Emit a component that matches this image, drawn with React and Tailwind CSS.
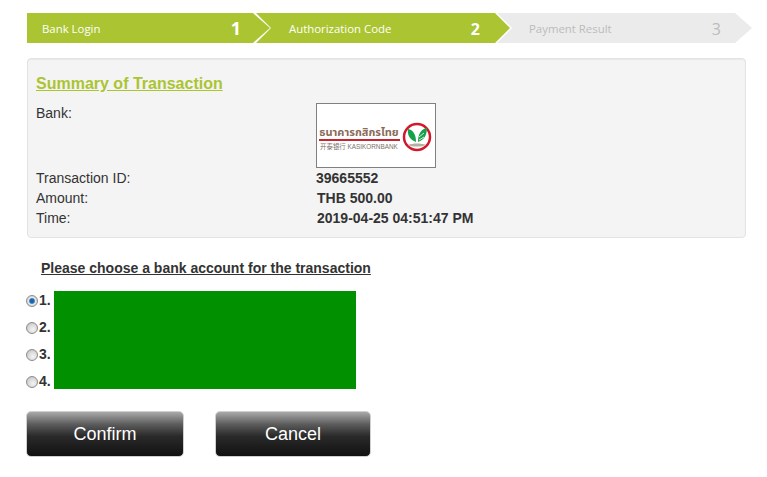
import React from "react";

function Step({ label, num, className, labelClass, numClass, numPos }) {
  return (
    <div className={`flex h-[30px] items-center pt-[1px] ${className}`}>
      <span className={`font-['Open_Sans',sans-serif] text-[11.4px] ${labelClass}`}>{label}</span>
      <span className={`ml-auto font-['Open_Sans',sans-serif] ${numClass} ${numPos}`}>{num}</span>
    </div>
  );
}

function BankLogo() {
  return (
    <div className="flex h-[65px] w-[120px] items-center border border-[#808080] bg-white pl-[1px] pt-[5px]">
      <div className="flex w-[82px] flex-col items-center">
        <span className="font-['Noto_Sans','Noto_Sans_Thai','DejaVu_Sans',sans-serif] text-[11px] font-bold leading-[14px] whitespace-nowrap text-[#8a6a58]">
          ธนาคารกสิกรไทย
        </span>
        <div className="h-[2px] w-[81px] bg-[#d0202c]" />
        <span className="mt-[2px] font-['Liberation_Sans','Noto_Sans_CJK_SC',sans-serif] text-[6.4px] leading-[8px] whitespace-nowrap text-[#7a7068]">
          开泰银行 KASIKORNBANK
        </span>
      </div>
      <svg width="30" height="30" viewBox="0 0 30 30" className="-mt-[2px] ml-[2px]">
        <circle cx="15" cy="15" r="13" fill="#fff" stroke="#d3182c" strokeWidth="2.5" />
        <path d="M14 20 C 8 18 5 13 6 7 C 11 8 14 12 14 20 Z" fill="#15a04c" />
        <path d="M16 20 C 16 12 19 7 25 6 C 25 13 22 18 16 20 Z" fill="#15a04c" />
        <path d="M17 15 L22 11 M17 18 L22 15" stroke="#fff" strokeWidth="0.8" />
        <path d="M6 23 C 11 21 19 21 24 23 C 20 25 10 25 6 23 Z" fill="#b5aea2" />
      </svg>
    </div>
  );
}

function Row({ label, value, valueClass }) {
  return (
    <div className="flex h-5 items-center">
      <div className="w-[280px]">{label}</div>
      <div className={`font-bold ${valueClass}`}>{value}</div>
    </div>
  );
}

function BankOption({ n, checked }) {
  return (
    <label className="-ml-[1px] flex h-[27px] items-center">
      <input
        type="radio"
        name="account"
        defaultChecked={checked}
        className={`h-[12px] w-[12px] appearance-none rounded-full border border-[#8c8c8c] ${
          checked
            ? "bg-[radial-gradient(circle,#0f5fa8_0%,#1d6fb8_32%,#e8e8e8_48%,#bdbdbd_100%)]"
            : "bg-[radial-gradient(circle_at_60%_65%,#f4f4f4_0%,#d8d8d8_55%,#b4b4b4_100%)]"
        }`}
      />
      <span className="ml-[1px] text-[14px] font-bold text-[#333]">{n}.</span>
    </label>
  );
}

function ActionButton({ children, className }) {
  return (
    <button className={`h-[46px] rounded-[5px] border border-[#cfcfcf] bg-[linear-gradient(#a9a9a9_0%,#5c5c5c_28%,#2a2a2a_55%,#111_100%)] text-[18px] text-white ${className}`}>
      {children}
    </button>
  );
}

export default function App() {
  return (
    <div className="min-h-[477px] bg-white px-[27px] pt-[13px] font-['Liberation_Sans',Arial,sans-serif] text-[14px] text-[#333]">
      <div className="flex w-[725px]">
        <Step
          label="Bank Login"
          num="1"
          className="w-[243px] bg-[#abc431] pl-[15px] [clip-path:polygon(0_0,226px_0,243px_15px,226px_30px,0_30px)]"
          labelClass="text-white"
          numClass="text-[18px] font-bold text-white"
          numPos="mr-[29px]"
        />
        <Step
          label="Authorization Code"
          num="2"
          className="-ml-[14px] w-[254px] bg-[#abc431] pl-[33px] [clip-path:polygon(0_0,239px_0,254px_15px,239px_30px,0_30px,15px_15px)]"
          labelClass="text-white"
          numClass="text-[16px] font-bold text-white"
          numPos="mr-[30px]"
        />
        <Step
          label="Payment Result"
          num="3"
          className="-ml-[13px] w-[255px] bg-[#ebebeb] pl-[32px] [clip-path:polygon(0_0,238px_0,255px_15px,238px_30px,0_30px,15px_15px)]"
          labelClass="text-[#bcbcbc]"
          numClass="text-[16px] text-[#bcbcbc]"
          numPos="mr-[31px]"
        />
      </div>

      <div className="mt-[15px] h-[180px] w-[719px] rounded-[4px] border border-[#e3e3e3] bg-[#f4f4f4] pl-[8px] pt-[15px] shadow-[inset_0_1px_1px_rgba(0,0,0,0.05)]">
        <h2 className="text-[16px] font-bold leading-5 text-[#abc431] underline">Summary of Transaction</h2>
        <div className="mt-[9px] flex h-[65px]">
          <div className="w-[280px] leading-5">Bank:</div>
          <BankLogo />
        </div>
        <div>
          <Row label="Transaction ID:" value="39665552" />
          <Row label="Amount:" value="THB 500.00" valueClass="ml-[1px]" />
          <Row label="Time:" value="2019-04-25 04:51:47 PM" valueClass="ml-[1px]" />
        </div>
      </div>

      <p className="mt-[20px] pl-[14px] font-bold leading-5 underline">Please choose a bank account for the transaction</p>

      <div className="mt-[13px] flex">
        <div className="-mt-[4px] w-[27px]">
          <BankOption n={1} checked />
          <BankOption n={2} />
          <BankOption n={3} />
          <BankOption n={4} />
        </div>
        <div className="h-[98px] w-[302px] bg-[#009000]" />
      </div>

      <div className="mt-[16px] -ml-[1px] flex">
        <ActionButton className="w-[158px]">Confirm</ActionButton>
        <ActionButton className="ml-[31px] w-[156px]">Cancel</ActionButton>
      </div>
    </div>
  );
}
